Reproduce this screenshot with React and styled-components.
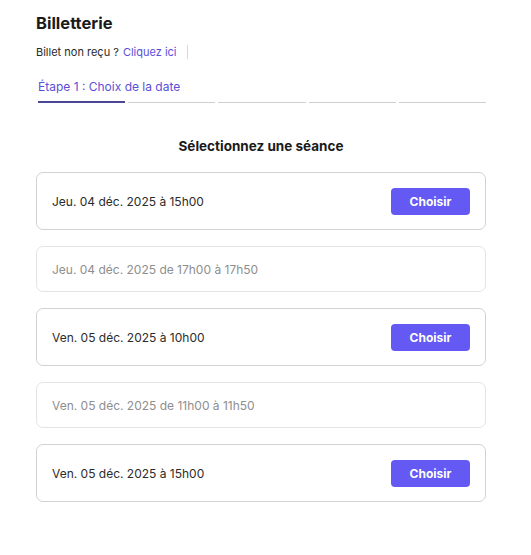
import React from "react";
import styled, { createGlobalStyle } from "styled-components";

const GlobalStyle = createGlobalStyle`
  body {
    margin: 0;
    background: #ffffff;
    font-family: Inter, "Noto Sans", sans-serif;
    color: #1f1f1f;
  }
`;

const Page = styled.div`
  width: 450px;
  padding: 12px 0 0 36px;
`;

const Title = styled.h1`
  margin: 0;
  font-size: 16.5px;
  font-weight: 700;
  line-height: 22px;
  color: #1a1a1a;
`;

const Help = styled.div`
  display: flex;
  align-items: center;
  margin-top: 10px;
  font-size: 11px;
  line-height: 16px;
  color: #2a2a2a;
`;

const HelpLink = styled.a`
  color: #5b4fd6;
  margin-left: 4px;
  text-decoration: none;
`;

const Sep = styled.span`
  display: inline-block;
  width: 1px;
  height: 14px;
  background: #d6d6d6;
  margin-left: 10px;
`;

const Steps = styled.div`
  display: grid;
  grid-template-columns: repeat(5, minmax(0, 1fr));
  column-gap: 3px;
  margin: 12px 0 0 2px;
`;

const Step = styled.div`
  display: flex;
  flex-direction: column;
  justify-content: flex-end;
  box-sizing: border-box;
  height: 31px;
  border-bottom: ${(p) => (p.$active ? "2px solid #4a4896" : "1px solid #cfcfcf")};
`;

const StepLabel = styled.span`
  white-space: nowrap;
  font-size: 12px;
  line-height: 16px;
  color: #5b4fd6;
  padding-bottom: 6px;
`;

const Heading = styled.h2`
  margin: 34px 0 0;
  text-align: center;
  font-size: 13.5px;
  font-weight: 700;
  line-height: 18px;
  color: #1a1a1a;
`;

const List = styled.div`
  display: flex;
  flex-direction: column;
  gap: 16px;
  margin-top: 17px;
`;

const Card = styled.div`
  display: flex;
  align-items: center;
  justify-content: space-between;
  box-sizing: border-box;
  height: ${(p) => (p.$disabled ? "46px" : "58px")};
  padding: 0 15px;
  border: 1px solid ${(p) => (p.$disabled ? "#e4e4e4" : "#d2d2d2")};
  border-radius: 7px;
`;

const DateText = styled.span`
  font-size: 12px;
  color: ${(p) => (p.$disabled ? "#8e8e8e" : "#2b2b2b")};
`;

const ChooseButton = styled.button`
  width: 79px;
  height: 27px;
  border: none;
  border-radius: 4px;
  background: #6459f2;
  color: #ffffff;
  font-family: Inter, sans-serif;
  font-size: 12px;
  font-weight: 700;
  cursor: pointer;
`;

const sessions = [
  { label: "Jeu. 04 déc. 2025 à 15h00" },
  { label: "Jeu. 04 déc. 2025 de 17h00 à 17h50", disabled: true },
  { label: "Ven. 05 déc. 2025 à 10h00" },
  { label: "Ven. 05 déc. 2025 de 11h00 à 11h50", disabled: true },
  { label: "Ven. 05 déc. 2025 à 15h00" },
];

export default function App() {
  return (
    <>
      <GlobalStyle />
      <Page>
        <Title>Billetterie</Title>
        <Help>
          Billet non reçu ?<HelpLink href="#">Cliquez ici</HelpLink>
          <Sep />
        </Help>
        <Steps>
          <Step $active>
            <StepLabel>Étape 1 : Choix de la date</StepLabel>
          </Step>
          <Step />
          <Step />
          <Step />
          <Step />
        </Steps>
        <Heading>Sélectionnez une séance</Heading>
        <List>
          {sessions.map((s, i) => (
            <Card key={i} $disabled={s.disabled}>
              <DateText $disabled={s.disabled}>{s.label}</DateText>
              {!s.disabled && <ChooseButton>Choisir</ChooseButton>}
            </Card>
          ))}
        </List>
      </Page>
    </>
  );
}
